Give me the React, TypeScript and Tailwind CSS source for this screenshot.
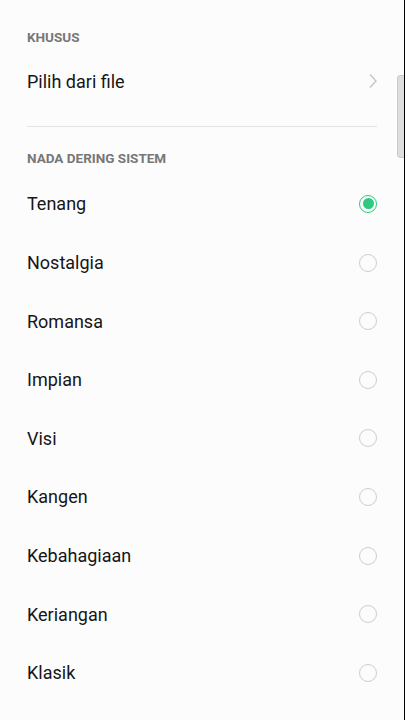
const tones = [
  'Tenang',
  'Nostalgia',
  'Romansa',
  'Impian',
  'Visi',
  'Kangen',
  'Kebahagiaan',
  'Keriangan',
  'Klasik',
]

function Radio({ checked }: { checked: boolean }) {
  if (checked) {
    return (
      <span className="flex h-[18px] w-[18px] shrink-0 items-center justify-center rounded-full border-[1.5px] border-[#2fc980]">
        <span className="h-[11px] w-[11px] rounded-full bg-[#2fc980]" />
      </span>
    )
  }
  return <span className="block h-[18px] w-[18px] shrink-0 rounded-full border-[1.5px] border-[#cdcdcd]" />
}

export default function App() {
  const selected = 'Tenang'

  return (
    <div
      className="relative h-[720px] w-[405px] overflow-hidden border-r border-black bg-[#fcfcfc] text-[#161616]"
      style={{ fontFamily: 'Roboto, "Noto Sans", sans-serif' }}
    >
      <div className="pl-[27px] pr-[27px]">
        <div className="pt-[29px] text-[13.5px] font-bold leading-[16px] text-[#777]">KHUSUS</div>
        <div className="mt-[4px] flex h-[64px] items-center justify-between">
          <span className="text-[18px]">Pilih dari file</span>
          <svg width="10" height="16" viewBox="0 0 10 16" className="mr-[-1px]">
            <path d="M2 1.5 L8 8 L2 14.5" fill="none" stroke="#c4c4c4" strokeWidth="1.3" />
          </svg>
        </div>
        <div className="mt-[13px] h-px bg-[#e4e4e4]" />
        <div className="mt-[23px] text-[13.5px] font-bold leading-[16px] text-[#777]">NADA DERING SISTEM</div>
        <div className="mt-[8.7px]">
          {tones.map(t => (
            <div key={t} className="flex h-[58.6px] items-center justify-between">
              <span className="text-[18px]">{t}</span>
              <Radio checked={t === selected} />
            </div>
          ))}
        </div>
      </div>
      {/* scroll thumb */}
      <div className="absolute right-0 top-[75px] h-[83px] w-[7px] rounded-l-[4px] border border-r-0 border-[#c9c9c9] bg-[#dedede]" />
    </div>
  )
}
